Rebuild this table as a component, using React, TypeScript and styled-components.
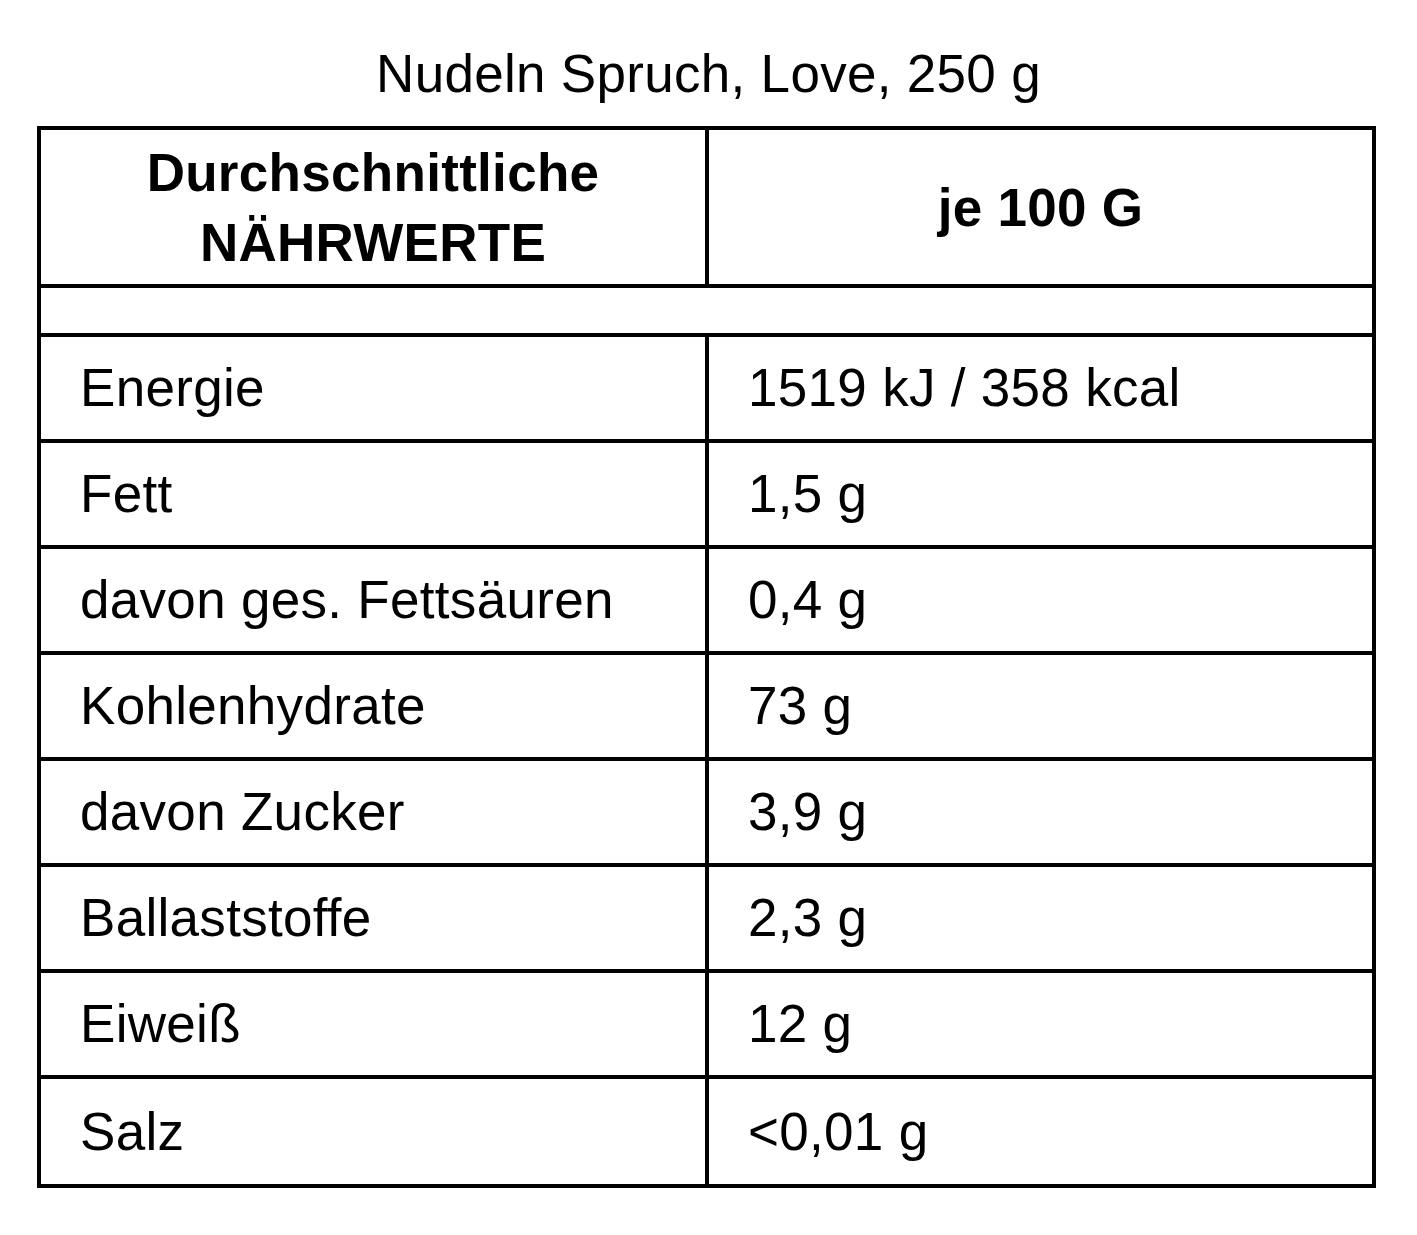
import styled, { createGlobalStyle } from 'styled-components';

const GlobalStyle = createGlobalStyle`
  html, body {
    margin: 0;
    padding: 0;
    background: #ffffff;
  }
  body {
    font-family: "Liberation Sans", Arial, sans-serif;
    color: #000000;
    letter-spacing: 0.3px;
  }
`;

const Page = styled.main`
  width: 1417px;
  min-height: 1235px;
  padding-top: 43px;
  box-sizing: border-box;
`;

const Title = styled.h1`
  margin: 0 0 22px;
  font-size: 53px;
  font-weight: 400;
  line-height: 61px;
  text-align: center;
`;

const Table = styled.section`
  width: 1339px;
  margin-left: 37px;
  border: 4px solid #000;
  box-sizing: border-box;
`;

const Row = styled.div<{ $height: number }>`
  display: grid;
  grid-template-columns: 664px 1fr;
  height: ${({ $height }) => $height}px;
  box-sizing: content-box;

  & + & {
    border-top: 4px solid #000;
  }
`;

const Cell = styled.div<{ $head?: boolean }>`
  display: flex;
  align-items: center;
  justify-content: ${({ $head }) => ($head ? 'center' : 'flex-start')};
  padding-left: ${({ $head }) => ($head ? '0' : '39px')};
  padding-top: ${({ $head }) => ($head ? '2px' : '0')};
  font-size: 53px;
  font-weight: ${({ $head }) => ($head ? 700 : 400)};
  line-height: 70px;
  text-align: center;
  white-space: nowrap;

  & + & {
    border-left: 4px solid #000;
  }
`;

const SpacerRow = styled.div`
  height: 45px;
  border-top: 4px solid #000;
  border-bottom: 4px solid #000;
`;

const rows: [string, string][] = [
  ['Energie', '1519 kJ / 358 kcal'],
  ['Fett', '1,5 g'],
  ['davon ges. Fettsäuren', '0,4 g'],
  ['Kohlenhydrate', '73 g'],
  ['davon Zucker', '3,9 g'],
  ['Ballaststoffe', '2,3 g'],
  ['Eiweiß', '12 g'],
  ['Salz', '<0,01 g'],
];

const App = () => {
  return (
    <>
      <GlobalStyle />
      <Page>
        <Title>Nudeln Spruch, Love, 250 g</Title>
        <Table>
          <Row $height={154}>
            <Cell $head>
              Durchschnittliche
              <br />
              NÄHRWERTE
            </Cell>
            <Cell $head>je 100 G</Cell>
          </Row>
          <SpacerRow />
          {rows.map(([label, value], i) => (
            <Row key={label} $height={i === rows.length - 1 ? 105 : 102}>
              <Cell>{label}</Cell>
              <Cell>{value}</Cell>
            </Row>
          ))}
        </Table>
      </Page>
    </>
  );
};

export default App;
